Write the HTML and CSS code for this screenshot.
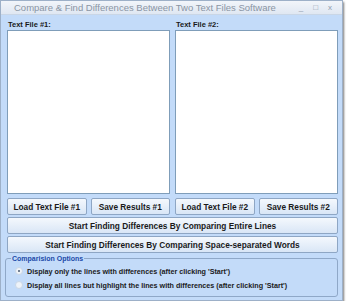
FILE: index.html
```html
<!DOCTYPE html>
<html>
<head>
    <meta charset="utf-8">
    <title>Compare &amp; Find Differences Between Two Text Files Software</title>
    <link rel="stylesheet" href="styles.css">
</head>
<body>
<div class="window">
    <div class="titlebar">
        <span class="title">Compare &amp; Find Differences Between Two Text Files Software</span>
        <span class="controls">
            <span class="ctl">_</span>
            <span class="ctl">&#9633;</span>
            <span class="ctl">x</span>
        </span>
    </div>
    <div class="client">
        <div class="files">
            <div class="file">
                <div class="label">Text File #1:</div>
                <textarea class="text"></textarea>
                <div class="pair">
                    <button class="btn">Load Text File #1</button>
                    <button class="btn">Save Results #1</button>
                </div>
            </div>
            <div class="file">
                <div class="label">Text File #2:</div>
                <textarea class="text"></textarea>
                <div class="pair">
                    <button class="btn">Load Text File #2</button>
                    <button class="btn">Save Results #2</button>
                </div>
            </div>
        </div>
        <button class="btn wide">Start Finding Differences By Comparing Entire Lines</button>
        <button class="btn wide">Start Finding Differences By Comparing Space-separated Words</button>
        <fieldset class="options">
            <legend>Comparision Options</legend>
            <label class="radio"><span class="dot on"></span>Display only the lines with differences (after clicking 'Start')</label>
            <label class="radio"><span class="dot"></span>Display all lines but highlight the lines with differences (after clicking 'Start')</label>
        </fieldset>
    </div>
</div>
</body>
</html>
```
FILE: styles.css
```css
body {
    margin: 0;
    background-color: #ffffff;
    font-family: "Liberation Sans", Arial, sans-serif;
}

.window {
    width: 341px;
    height: 299px;
    border: 1px solid #9db0c8;
    background-color: #c3dbf9;
    box-shadow: 1px 2px 2px #7a7a7a;
    display: flex;
    flex-direction: column;
}

.titlebar {
    height: 19px;
    display: flex;
    align-items: center;
    justify-content: space-between;
    background: linear-gradient(#f2f5fa, #dfe7f2);
    border-bottom: 1px solid #c9d6e6;
    padding: 0 10px 0 13px;
}

.title {
    font-size: 9.5px;
    color: #8a95a4;
}

.controls {
    display: flex;
    gap: 10px;
    font-size: 8px;
    color: #8f9cad;
}

.client {
    flex: 1;
    display: flex;
    flex-direction: column;
    padding: 5px 4px 3px 3px;
}

.files {
    display: flex;
    gap: 5px;
    padding: 0 0 0 3px;
}

.file {
    flex: 1;
    min-width: 0;
    display: flex;
    flex-direction: column;
}

.label {
    font-size: 7.5px;
    font-weight: bold;
    color: #1a1a1a;
    height: 10px;
    padding-left: 1px;
}

.text {
    width: 100%;
    height: 164px;
    margin: 0;
    border: 1px solid #7f9db9;
    background-color: #ffffff;
    resize: none;
    box-sizing: border-box;
}

.pair {
    display: flex;
    gap: 4px;
    margin-top: 4px;
}

.btn {
    height: 17px;
    flex: 1;
    min-width: 0;
    margin: 0;
    padding: 0;
    border: 1px solid #8ea6c4;
    border-radius: 2px;
    background: linear-gradient(#f4f8fd, #d9e6f6);
    font-family: "Liberation Sans", Arial, sans-serif;
    font-size: 8.3px;
    font-weight: bold;
    color: #1a1a1a;
    white-space: nowrap;
}

.wide {
    flex: none;
    margin: 2px 0 0 3px;
}

.options {
    margin: 2px 0 0 1px;
    padding: 2px 6px 4px 9px;
    border: 1px solid #8fa8c8;
    border-radius: 3px;
}

.options legend {
    font-size: 7px;
    font-weight: bold;
    color: #1b4aa8;
    padding: 0 1px;
    margin-left: -4px;
}

.radio {
    display: flex;
    align-items: center;
    height: 14px;
    font-size: 7.2px;
    font-weight: bold;
    color: #1a1a1a;
}

.dot {
    width: 6px;
    height: 6px;
    border-radius: 50%;
    border: 1px solid #c9d6e6;
    background-color: #eef3f9;
    margin: 0 4px 0 0;
    display: flex;
    align-items: center;
    justify-content: center;
}

.dot.on::after {
    content: "";
    width: 2px;
    height: 2px;
    border-radius: 50%;
    background-color: #4a5a70;
}
```
